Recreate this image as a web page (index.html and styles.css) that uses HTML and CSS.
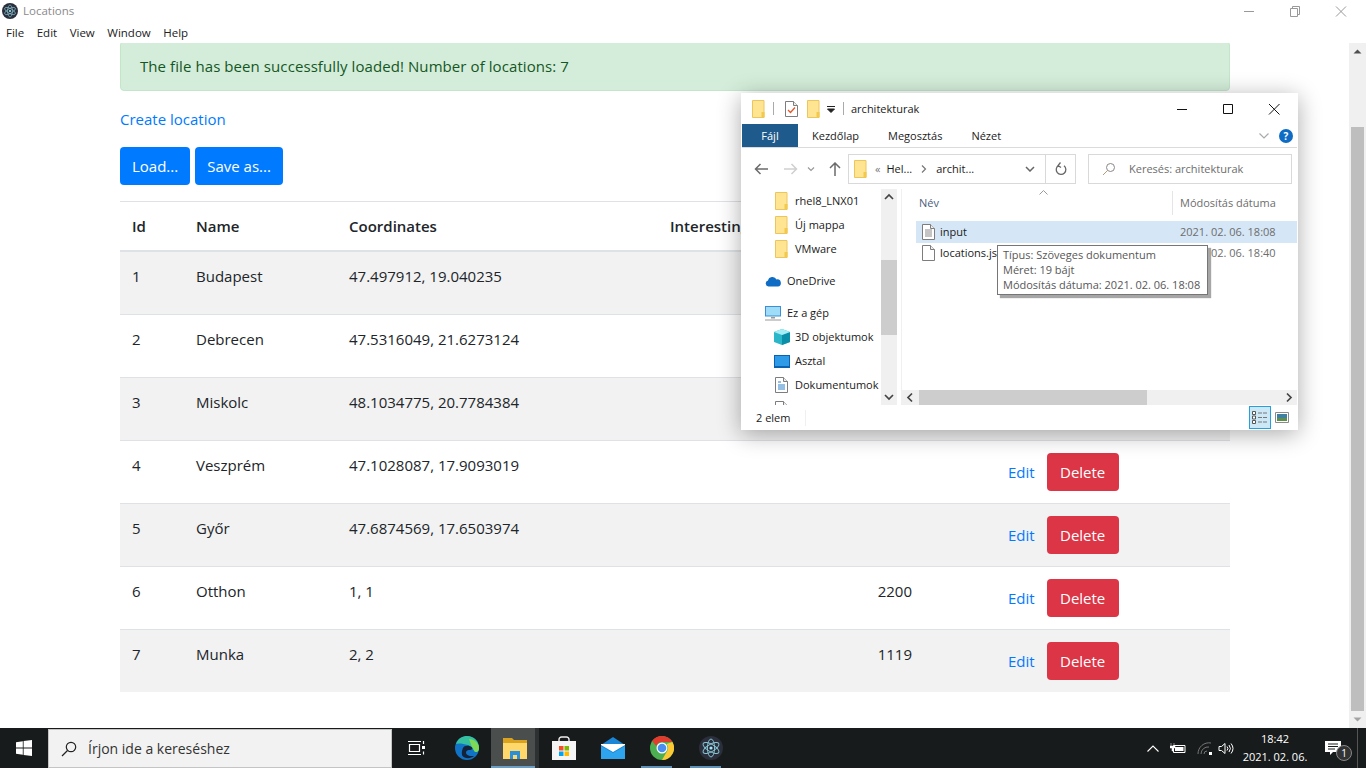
FILE: index.html
```html
<!DOCTYPE html>
<html lang="en">

<head>
    <meta charset="UTF-8">
    <title>Locations</title>
    <link rel="stylesheet" href="styles.css">
</head>

<body>
    <svg class="defs" width="0" height="0">
        <symbol id="folder" viewBox="0 0 13 18">
            <path d="M.5.5h11.5v17H.5z" fill="#ffe592" stroke="#ecc65c"/>
            <path d="M9.5 12h3v5.5h-3z" fill="#f2c94c"/>
        </symbol>
        <symbol id="doc" viewBox="0 0 13 16">
            <path d="M.5.5h8l4 4v11H.5z" fill="#fff" stroke="#7d7d7d"/>
            <path d="M8.5.5v4h4" fill="#eee" stroke="#7d7d7d"/>
        </symbol>
        <symbol id="electron" viewBox="0 0 24 24">
            <circle cx="12" cy="12" r="12" fill="#2b2e3b"/>
            <g fill="none" stroke="#9feaf9" stroke-width="1" opacity=".8">
                <ellipse cx="12" cy="12" rx="9" ry="3.6" transform="rotate(30 12 12)"/>
                <ellipse cx="12" cy="12" rx="9" ry="3.6" transform="rotate(90 12 12)"/>
                <ellipse cx="12" cy="12" rx="9" ry="3.6" transform="rotate(150 12 12)"/>
            </g>
            <circle cx="12" cy="12" r="1.6" fill="#9feaf9"/>
        </symbol>
    </svg>

    <header class="titlebar">
        <svg class="app-icon" width="16" height="16"><use href="#electron"/></svg>
        <span class="app-title">Locations</span>
        <div class="win-controls">
            <svg width="46" height="20" viewBox="0 0 46 20"><path d="M18 10.500h10" stroke="#999" fill="none"/></svg>
            <svg width="46" height="20" viewBox="0 0 46 20"><path d="M18.500 7.500h7v8h-7zM20.500 7.500v-2h7v8h-2" stroke="#999" fill="none"/></svg>
            <svg width="46" height="20" viewBox="0 0 46 20"><path d="M18 5.500l10 10M28 5.500l-10 10" stroke="#999" fill="none"/></svg>
        </div>
    </header>
    <nav class="menubar">
        <span>File</span>
        <span>Edit</span>
        <span>View</span>
        <span>Window</span>
        <span>Help</span>
    </nav>

    <div class="viewport">
        <main class="page">
            <div class="alert">The file has been successfully loaded! Number of locations: 7</div>
            <p class="create"><a href="#">Create location</a></p>
            <div class="file-buttons">
                <button class="btn btn-primary">Load...</button>
                <button class="btn btn-primary">Save as...</button>
            </div>

            <table class="locations">
                <colgroup>
                    <col class="col-id">
                    <col class="col-name">
                    <col class="col-coord">
                    <col class="col-int">
                    <col class="col-gap">
                    <col>
                </colgroup>
                <thead>
                    <tr>
                        <th>Id</th>
                        <th>Name</th>
                        <th>Coordinates</th>
                        <th>Interesting capacity</th>
                        <th></th>
                        <th></th>
                    </tr>
                </thead>
                <tbody>
                    <tr>
                        <td>1</td><td>Budapest</td><td>47.497912, 19.040235</td><td class="num"></td><td></td>
                        <td><a class="edit" href="#">Edit</a><button class="btn btn-danger">Delete</button></td>
                    </tr>
                    <tr>
                        <td>2</td><td>Debrecen</td><td>47.5316049, 21.6273124</td><td class="num"></td><td></td>
                        <td><a class="edit" href="#">Edit</a><button class="btn btn-danger">Delete</button></td>
                    </tr>
                    <tr>
                        <td>3</td><td>Miskolc</td><td>48.1034775, 20.7784384</td><td class="num"></td><td></td>
                        <td><a class="edit" href="#">Edit</a><button class="btn btn-danger">Delete</button></td>
                    </tr>
                    <tr>
                        <td>4</td><td>Veszprém</td><td>47.1028087, 17.9093019</td><td class="num"></td><td></td>
                        <td><a class="edit" href="#">Edit</a><button class="btn btn-danger">Delete</button></td>
                    </tr>
                    <tr>
                        <td>5</td><td>Győr</td><td>47.6874569, 17.6503974</td><td class="num"></td><td></td>
                        <td><a class="edit" href="#">Edit</a><button class="btn btn-danger">Delete</button></td>
                    </tr>
                    <tr>
                        <td>6</td><td>Otthon</td><td>1, 1</td><td class="num">2200</td><td></td>
                        <td><a class="edit" href="#">Edit</a><button class="btn btn-danger">Delete</button></td>
                    </tr>
                    <tr>
                        <td>7</td><td>Munka</td><td>2, 2</td><td class="num">1119</td><td></td>
                        <td><a class="edit" href="#">Edit</a><button class="btn btn-danger">Delete</button></td>
                    </tr>
                </tbody>
            </table>
        </main>

        <div class="page-scrollbar">
            <svg width="17" height="17" viewBox="0 0 17 17"><path d="M4.500 10.500l4-4 4 4z" fill="#505050"/></svg>
            <div class="page-track"><div class="page-thumb"></div></div>
            <svg width="17" height="17" viewBox="0 0 17 17"><path d="M4.500 6.500l4 4 4-4z" fill="#a3a3a3"/></svg>
        </div>
    </div>

    <!-- file explorer window on top of the app -->
    <section class="explorer">
        <div class="ex-title">
            <svg width="13" height="18"><use href="#folder"/></svg>
            <i class="ex-sep"></i>
            <svg class="ex-check" width="13" height="16" viewBox="0 0 13 16">
                <use href="#doc"/>
                <path d="M3 9l2.500 2.500L10 6.500" fill="none" stroke="#e2572b" stroke-width="1.300"/>
            </svg>
            <svg class="ex-folder2" width="13" height="18"><use href="#folder"/></svg>
            <svg class="ex-drop" width="10" height="10" viewBox="0 0 10 10"><path d="M1 2.500h8M1.500 5h7L5 8.500z" stroke="#222" fill="#222"/></svg>
            <i class="ex-sep ex-sep2"></i>
            <span class="ex-name">architekturak</span>
            <div class="ex-controls">
                <svg width="46" height="30" viewBox="0 0 46 30"><path d="M18 15.500h10" stroke="#111" fill="none"/></svg>
                <svg width="46" height="30" viewBox="0 0 46 30"><path d="M18.500 10.500h9v9h-9z" stroke="#111" fill="none"/></svg>
                <svg width="46" height="30" viewBox="0 0 46 30"><path d="M18 10l10.500 10.500M28.500 10L18 20.500" stroke="#111" fill="none"/></svg>
            </div>
        </div>

        <div class="ex-tabs">
            <span class="ex-tab-file">Fájl</span>
            <span class="ex-tab ex-tab-home">Kezdőlap</span>
            <span class="ex-tab ex-tab-share">Megosztás</span>
            <span class="ex-tab ex-tab-view">Nézet</span>
            <svg class="ex-collapse" width="12" height="8" viewBox="0 0 12 8"><path d="M1.500 1.500L6 6l4.500-4.500" fill="none" stroke="#aaa" stroke-width="1.200"/></svg>
            <span class="ex-help">?</span>
        </div>

        <div class="ex-nav">
            <svg class="ex-back" width="14" height="12" viewBox="0 0 14 12"><path d="M6.500 1L1.500 6l5 5M1.500 6H14" fill="none" stroke="#6b6b6b" stroke-width="1.500"/></svg>
            <svg class="ex-fwd" width="14" height="12" viewBox="0 0 14 12"><path d="M7.500 1l5 5-5 5M12.500 6H0" fill="none" stroke="#cfcfcf" stroke-width="1.500"/></svg>
            <svg class="ex-hist" width="8" height="6" viewBox="0 0 8 6"><path d="M1 1.500l3 3 3-3" fill="none" stroke="#999" stroke-width="1.200"/></svg>
            <svg class="ex-up" width="12" height="14" viewBox="0 0 12 14"><path d="M1 6l5-5 5 5M6 1v13" fill="none" stroke="#6b6b6b" stroke-width="1.500"/></svg>
            <div class="ex-address">
                <svg width="13" height="18"><use href="#folder"/></svg>
                <span class="ex-crumb-arrows">«</span>
                <span>Hel...</span>
                <svg class="ex-crumb-sep" width="6" height="8" viewBox="0 0 6 8"><path d="M1 .5L4.500 4 1 7.500" fill="none" stroke="#777" stroke-width="1.200"/></svg>
                <span>archit...</span>
                <svg class="ex-addr-drop" width="10" height="6" viewBox="0 0 10 6"><path d="M1 1l4 4 4-4" fill="none" stroke="#666" stroke-width="1.500"/></svg>
                <div class="ex-refresh">
                    <svg width="12" height="14" viewBox="0 0 12 14"><path d="M3.500 3.500A4.800 4.800 0 1 0 9 3.800M5.500 .5l-2.500 3 3 2" fill="none" stroke="#666" stroke-width="1.300"/></svg>
                </div>
            </div>
            <div class="ex-search">
                <svg width="14" height="14" viewBox="0 0 14 14"><circle cx="8.500" cy="5.500" r="4" fill="none" stroke="#888"/><path d="M5.500 8.500L1 13" stroke="#bb9a7a"/></svg>
                <span>Keresés: architekturak</span>
            </div>
        </div>

        <div class="ex-body">
            <div class="ex-tree">
                <ul class="ex-tree-list">
                    <li class="lvl2"><svg width="13" height="18"><use href="#folder"/></svg>rhel8_LNX01</li>
                    <li class="lvl2"><svg width="13" height="18"><use href="#folder"/></svg>Új mappa</li>
                    <li class="lvl2 group-end"><svg width="13" height="18"><use href="#folder"/></svg>VMware</li>
                    <li class="lvl1 group-end">
                        <svg width="16" height="11" viewBox="0 0 16 11"><path d="M3.500 10.500A3 3 0 0 1 3 4.600 4.500 4.500 0 0 1 11.500 3.500 3.500 3.500 0 0 1 13 10.500z" fill="#0f6cc4"/></svg>OneDrive
                    </li>
                    <li class="lvl1">
                        <svg width="16" height="15" viewBox="0 0 16 15"><path d="M0 0h16v10.500H0z" fill="#3a8fd6"/><path d="M1 1h14v8.500H1z" fill="#9fdcf8"/><path d="M6 11h4v1.500H6zM0 13.500h16v1H0z" fill="#9a9a9a"/></svg>Ez a gép
                    </li>
                    <li class="lvl2 wide">
                        <svg width="16" height="16" viewBox="0 0 16 16"><path d="M8 0l8 3v10l-8 3-8-3V3z" fill="#2bb7c9"/><path d="M8 6l8-3v10l-8 3z" fill="#0b8fa8"/><path d="M8 0l8 3-8 3-8-3z" fill="#a6edf5"/></svg>3D objektumok
                    </li>
                    <li class="lvl2 wide">
                        <svg width="16" height="13" viewBox="0 0 16 13"><path d="M0 0h16v13H0z" fill="#0a63b0"/><path d="M1 1h14v10H1z" fill="#2d9be8"/></svg>Asztal
                    </li>
                    <li class="lvl2">
                        <svg width="13" height="16" viewBox="0 0 13 16"><use href="#doc"/><path d="M3 5h3M3 8h7M3 10h7M3 12h7" stroke="#2a7fc7"/></svg>Dokumentumok
                    </li>
                    <li class="lvl2"><svg width="13" height="16" viewBox="0 0 13 16"><use href="#doc"/></svg>Képek</li>
                </ul>
                <div class="ex-vscroll">
                    <svg width="16" height="16" viewBox="0 0 16 16"><path d="M4 10l4-4 4 4" fill="none" stroke="#444" stroke-width="1.700"/></svg>
                    <div class="ex-vtrack"><div class="ex-vthumb"></div></div>
                    <svg width="16" height="16" viewBox="0 0 16 16"><path d="M4 6l4 4 4-4" fill="none" stroke="#444" stroke-width="1.700"/></svg>
                </div>
            </div>

            <div class="ex-files">
                <div class="ex-head">
                    <span class="ex-col-name">Név</span>
                    <svg class="ex-sort" width="9" height="5" viewBox="0 0 9 5"><path d="M.5 4.500l4-4 4 4" fill="none" stroke="#9a9a9a"/></svg>
                    <span class="ex-col-date">Módosítás dátuma</span>
                </div>
                <div class="ex-row is-selected">
                    <span class="ex-col-name">
                        <svg width="13" height="16" viewBox="0 0 13 16"><use href="#doc"/><path d="M3 6h7M3 8h7M3 10h7M3 12h7" stroke="#8a8a8a"/></svg>input
                    </span>
                    <span class="ex-col-date">2021. 02. 06. 18:08</span>
                </div>
                <div class="ex-row ex-row-next">
                    <span class="ex-col-name">
                        <svg width="13" height="16"><use href="#doc"/></svg>locations.json
                    </span>
                    <span class="ex-col-date">2021. 02. 06. 18:40</span>
                </div>
                <div class="ex-hscroll">
                    <svg width="17" height="15" viewBox="0 0 17 15"><path d="M10 3.500l-4 4 4 4" fill="none" stroke="#444" stroke-width="1.700"/></svg>
                    <div class="ex-hthumb"></div>
                    <svg width="17" height="15" viewBox="0 0 17 15"><path d="M7 3.500l4 4-4 4" fill="none" stroke="#444" stroke-width="1.700"/></svg>
                </div>
            </div>
        </div>

        <div class="ex-status">
            <span class="ex-count">2 elem</span>
            <div class="ex-views">
                <span class="ex-view is-on">
                    <svg width="16" height="13" viewBox="0 0 16 13"><path d="M.5.500h3v3h-3zM.5 5h3v3h-3zM.5 9.500h3v3h-3z" fill="#fff" stroke="#555"/><path d="M6 2h9.500M6 6.500h9.500M6 11h9.500" stroke="#777" stroke-dasharray="4 1"/></svg>
                </span>
                <svg width="14" height="11" viewBox="0 0 14 11"><path d="M.5.500h13v10H.5z" fill="#fff" stroke="#8a8a8a"/><path d="M2 2h10v4H2z" fill="#3f7f9f"/><path d="M2 6h10v3H2z" fill="#5f8f4f"/></svg>
            </div>
        </div>

        <div class="ex-tooltip">
            <div>Típus: Szöveges dokumentum</div>
            <div>Méret: 19 bájt</div>
            <div>Módosítás dátuma: 2021. 02. 06. 18:08</div>
        </div>
    </section>

    <footer class="taskbar">
        <div class="start">
            <svg width="16" height="16" viewBox="0 0 16 16"><path d="M0 2.200l6.800-1v6.300H0zM7.600 1.100L16 0v7.500H7.600zM0 8.400h6.800v6.400L0 13.800zM7.600 8.400H16V16l-8.400-1.100z" fill="#fff"/></svg>
        </div>
        <div class="task-search">
            <svg width="16" height="16" viewBox="0 0 16 16"><circle cx="10" cy="6" r="4.700" fill="none" stroke="#222" stroke-width="1.200"/><path d="M6.500 9.500L1 15" stroke="#222" stroke-width="1.200"/></svg>
            <span>Írjon ide a kereséshez</span>
        </div>
        <div class="task-item task-view">
            <svg width="18" height="16" viewBox="0 0 18 16"><path d="M2.500 4.500h10v7h-10zM1 1.500h13M1 14.500h13M16.500 1v3M16.500 11.500v3" fill="none" stroke="#fff" stroke-width="1.200"/><path d="M15 6h3v3h-3z" fill="#fff"/></svg>
        </div>
        <div class="task-item task-edge">
            <svg width="24" height="24" viewBox="0 0 24 24">
                <circle cx="12" cy="12" r="12" fill="#1173c5"/>
                <path d="M1 8C3 2 8 0 12 0c7 0 12 5 12 12 0 2-1 4-3 4-3 0-2-5-8-7C8 7.500 3 7 1 8z" fill="#35c1a1"/>
                <path d="M14 3c5 0 10 4 10 9 0 2-1 4-3 4-2 0-2-3-4-5z" fill="#7ed957"/>
                <path d="M8 12c1-3 7-3 9-.5 1 1.500-.5 2.500-2 2.500-2 0-4 .5-4 2.500 0 3 5 4 8 3.500-3 2.500-8 3-11 .5C6 18.500 7 14 8 12z" fill="#13233a"/>
            </svg>
        </div>
        <div class="task-item task-files is-active">
            <svg width="24" height="21" viewBox="0 0 24 21">
                <path d="M0 0h9l2 2h13v4H0z" fill="#d9a21f"/>
                <path d="M0 5h24v16H0z" fill="#ffd86b"/>
                <path d="M7 13h10v8h-3v-4h-4v4H7z" fill="#2a8fd8"/>
            </svg>
        </div>
        <div class="task-item">
            <svg width="24" height="24" viewBox="0 0 24 24">
                <path d="M7 6V3.500A2.500 2.500 0 0 1 9.500 1h5A2.500 2.500 0 0 1 17 3.500V6" fill="none" stroke="#eee" stroke-width="1.400"/>
                <path d="M0 5h24v19H0z" fill="#f5f5f5"/>
                <path d="M7 10h4.500v4.500H7z" fill="#f25022"/>
                <path d="M12.500 10H17v4.500h-4.500z" fill="#7fba00"/>
                <path d="M7 15.500h4.500V20H7z" fill="#00a4ef"/>
                <path d="M12.500 15.500H17V20h-4.500z" fill="#ffb900"/>
            </svg>
        </div>
        <div class="task-item">
            <svg width="24" height="22" viewBox="0 0 24 22">
                <path d="M0 8L12 0l12 8v14H0z" fill="#1b86d8"/>
                <path d="M0 7h24v1L12 15 0 8z" fill="#fff"/>
                <path d="M0 9l12 7 12-7v13H0z" fill="#2ea3ee"/>
            </svg>
        </div>
        <div class="task-item is-running">
            <svg width="24" height="24" viewBox="0 0 24 24">
                <circle cx="12" cy="12" r="12" fill="#4caf50"/>
                <path d="M12 0a12 12 0 0 1 10.400 6H12a6 6 0 0 0-5.700 4.200L2.200 5.100A12 12 0 0 1 12 0z" fill="#e33b2e"/>
                <path d="M22.400 6A12 12 0 0 1 12 24l5.200-9a6 6 0 0 0-.7-7z" fill="#fcc934"/>
                <circle cx="12" cy="12" r="5.500" fill="#fff"/>
                <circle cx="12" cy="12" r="4.300" fill="#4b8ef0"/>
            </svg>
        </div>
        <div class="task-item is-running">
            <svg width="24" height="24"><use href="#electron"/></svg>
        </div>

        <div class="tray">
            <svg class="tray-up" width="12" height="7" viewBox="0 0 12 7"><path d="M.5 6.500L6 1l5.500 5.500" fill="none" stroke="#fff" stroke-width="1.100"/></svg>
            <svg class="tray-batt" width="16" height="12" viewBox="0 0 16 12"><path d="M3.500 3.500h11.500v7H3.500z" fill="none" stroke="#fff"/><path d="M5 5h8.500v4H5z" fill="#fff"/><path d="M1 1v3M4 1v3M0 4h5v2H3.500v3H2V6H0z" fill="#fff" stroke="#fff" stroke-width=".5"/></svg>
            <svg class="tray-wifi" width="16" height="13" viewBox="0 0 16 13"><path d="M1 12A11 11 0 0 1 14 1M4 12a7 7 0 0 1 8-7M7 12a3 3 0 0 1 3-3" fill="none" stroke="#777"/><path d="M12 10h3v3h-3z" fill="#fff"/></svg>
            <svg class="tray-vol" width="16" height="13" viewBox="0 0 16 13"><path d="M1 4.500h2.500L7 1.500v10l-3.500-3H1zM9 4.500a3 3 0 0 1 0 4M11 3a5.500 5.500 0 0 1 0 7M13 1.500a8 8 0 0 1 0 10" fill="none" stroke="#fff"/></svg>
            <div class="clock">
                <span>18:42</span>
                <span>2021. 02. 06.</span>
            </div>
            <div class="notif">
                <svg width="16" height="15" viewBox="0 0 16 15"><path d="M0 0h16v11H8l-3 3v-3H0z" fill="#fff"/><path d="M3 3h10M3 5.500h10M3 8h7" stroke="#1a1c1c"/></svg>
                <span class="notif-badge">1</span>
            </div>
        </div>
        <i class="show-desktop"></i>
    </footer>
</body>

</html>
```

FILE: styles.css
```css
* {
    box-sizing: border-box;
}

html,
body {
    height: 100%;
}

body {
    margin: 0;
    display: flex;
    flex-direction: column;
    height: 768px;
    overflow: hidden;
    position: relative;
    background-color: #fff;
    font-family: 'Open Sans', 'Noto Sans', sans-serif;
    font-size: 15px;
    line-height: 24px;
    color: #212529;
}

.defs {
    position: absolute;
}

svg {
    display: block;
    flex: none;
}

/* app title and menu */
.titlebar {
    height: 22px;
    display: flex;
    align-items: center;
    flex: none;
    padding-left: 2px;
}

.app-title {
    margin-left: 5px;
    font-size: 11.500px;
    color: #8a8a8a;
}

.win-controls {
    margin-left: auto;
    display: flex;
    padding-right: 2px;
}

.menubar {
    height: 21px;
    flex: none;
    display: flex;
    align-items: center;
    padding-left: 6px;
    gap: 12.500px;
    font-size: 11.500px;
    color: #222;
}

/* app content */
.viewport {
    flex: 1;
    min-height: 0;
    display: flex;
    overflow: hidden;
}

.page {
    flex: 1;
    margin-top: -2px;
    padding: 0 120px;
    margin-right: -1px;
}

.alert {
    height: 50px;
    padding: 12px 20px 12px 19px;
    background-color: #d4edda;
    border: 1px solid #c3e6cb;
    border-radius: 4px;
    color: #155724;
    margin-bottom: 16px;
    letter-spacing: 0.08px;
}

.create {
    margin: 0 0 16px;
}

a {
    color: #007bff;
    text-decoration: none;
}

.file-buttons {
    display: flex;
    gap: 5px;
    margin-bottom: 16px;
}

.btn {
    height: 38px;
    padding: 0 12px;
    border: none;
    border-radius: 4px;
    color: #fff;
    font: inherit;
}

.btn-primary {
    background-color: #007bff;
}

.btn-danger {
    background-color: #dc3545;
    width: 72px;
}

.locations {
    width: 100%;
    table-layout: fixed;
    border-collapse: collapse;
}

.col-id {
    width: 64px;
}

.col-name {
    width: 153px;
}

.col-coord {
    width: 321px;
}

.col-int {
    width: 266px;
}

.col-gap {
    width: 60px;
}

.locations th,
.locations td {
    padding: 12px;
    text-align: left;
    vertical-align: top;
    border-top: 1px solid #dee2e6;
    white-space: nowrap;
}

.locations th {
    font-weight: 600;
    border-bottom: 2px solid #dee2e6;
    height: 49px;
}

.locations td {
    height: 63px;
}

.locations tbody tr:last-child td {
    height: 62px;
    padding-bottom: 11px;
}

.locations tbody tr:nth-child(odd) {
    background-color: #f2f2f2;
}

.locations .num {
    text-align: right;
}

.edit {
    display: inline-block;
    padding: 7px 12px;
}

.page-scrollbar {
    width: 17px;
    flex: none;
    display: flex;
    flex-direction: column;
    background-color: #f0f0f0;
}

.page-track {
    flex: 1;
    padding-top: 67px;
}

.page-thumb {
    height: 100%;
    margin: 0 2px;
    background-color: #bebebe;
}

/* explorer window */
.explorer {
    position: absolute;
    left: 741px;
    top: 93px;
    width: 557px;
    height: 337px;
    display: flex;
    flex-direction: column;
    background-color: #fff;
    box-shadow: 0 4px 22px rgba(0, 0, 0, 0.33);
    font-size: 11px;
    line-height: 16px;
    color: #1a1a1a;
    padding: 0 1px;
}

.ex-title {
    height: 31px;
    flex: none;
    display: flex;
    align-items: center;
    padding-left: 10px;
}

.ex-sep {
    width: 1px;
    height: 13px;
    margin-left: 8px;
    background-color: #aaa;
}

.ex-check {
    margin-left: 11px;
}

.ex-folder2 {
    margin-left: 9px;
}

.ex-drop {
    margin-left: 6px;
}

.ex-sep2 {
    margin-left: 7px;
}

.ex-name {
    margin-left: 7px;
    font-size: 11px;
}

.ex-controls {
    margin-left: auto;
    display: flex;
}

.ex-tabs {
    height: 24px;
    flex: none;
    display: flex;
    align-items: center;
    border-bottom: 1px solid #dadbdc;
}

.ex-tab-file {
    width: 56px;
    height: 23px;
    background-color: #1f5a8c;
    color: #fff;
    text-align: center;
    line-height: 23px;
}

.ex-tab {
    color: #222;
    font-size: 11px;
}

.ex-tab-home {
    margin-left: 14px;
}

.ex-tab-share {
    margin-left: 29px;
}

.ex-tab-view {
    margin-left: 29px;
}

.ex-collapse {
    margin-left: auto;
}

.ex-help {
    width: 14px;
    height: 14px;
    margin: 0 4px 0 9px;
    border-radius: 50%;
    background-color: #0f6cc4;
    color: #fff;
    font-size: 10px;
    font-weight: 700;
    line-height: 14px;
    text-align: center;
}

.ex-nav {
    height: 41px;
    flex: none;
    display: flex;
    align-items: center;
    position: relative;
}

.ex-back {
    margin-left: 12px;
}

.ex-fwd {
    margin-left: 16px;
}

.ex-hist {
    margin-left: 9px;
}

.ex-up {
    margin-left: 14px;
}

.ex-address {
    width: 228px;
    height: 30px;
    margin-left: 7px;
    display: flex;
    align-items: center;
    gap: 6px;
    padding-left: 5px;
    border: 1px solid #d9d9d9;
}

.ex-crumb-arrows {
    color: #777;
    margin-left: 2px;
}

.ex-crumb-sep {
    margin: 0 3px;
}

.ex-addr-drop {
    margin-left: auto;
}

.ex-refresh {
    width: 30px;
    height: 28px;
    margin-left: 4px;
    display: flex;
    align-items: center;
    justify-content: center;
    border-left: 1px solid #d9d9d9;
}

.ex-search {
    width: 204px;
    height: 30px;
    margin-left: 12px;
    display: flex;
    align-items: center;
    gap: 13px;
    padding-left: 13px;
    border: 1px solid #d9d9d9;
    color: #6d6d6d;
}

.ex-body {
    flex: 1;
    min-height: 0;
    display: flex;
}

.ex-tree {
    width: 155px;
    flex: none;
    display: flex;
    overflow: hidden;
}

.ex-tree-list {
    flex: 1;
    margin: 0;
    padding: 0;
    list-style: none;
    overflow: hidden;
}

.ex-tree-list li {
    height: 24px;
    display: flex;
    align-items: center;
    white-space: nowrap;
    gap: 7px;
}

.ex-tree-list .lvl1 {
    padding-left: 23px;
    gap: 6px;
}

.ex-tree-list .lvl2 {
    padding-left: 33px;
}

.ex-tree-list .lvl2.wide {
    padding-left: 32px;
    gap: 5px;
}

.ex-tree-list .group-end {
    margin-bottom: 8px;
}

.ex-vscroll {
    width: 16px;
    flex: none;
    display: flex;
    flex-direction: column;
    background-color: #f0f0f0;
}

.ex-vtrack {
    flex: 1;
    padding-top: 55px;
}

.ex-vthumb {
    height: 75px;
    background-color: #cdcdcd;
}

.ex-files {
    flex: 1;
    margin-left: 4px;
    display: flex;
    flex-direction: column;
    border-left: 1px solid #f0f0f0;
}

.ex-head {
    height: 28px;
    margin-bottom: 4px;
    flex: none;
    display: flex;
    align-items: center;
    padding-left: 17px;
    position: relative;
    color: #4c607a;
}

.ex-sort {
    position: absolute;
    left: 137px;
    top: 1px;
}

.ex-col-name {
    display: flex;
    align-items: center;
    gap: 5px;
    width: 257px;
    flex: none;
    padding-left: 6px;
    white-space: nowrap;
}

.ex-head .ex-col-name {
    width: 254px;
    padding-left: 0;
    border-right: 1px solid #e5e5e5;
    height: 24px;
}

.ex-col-date {
    padding-left: 7px;
    color: #6d6d6d;
    white-space: nowrap;
}

.ex-row {
    height: 22px;
    flex: none;
    margin-left: 14px;
    display: flex;
    align-items: center;
}

.ex-row-next {
    margin-top: -1px;
}

.ex-row.is-selected {
    background-color: #d5e6f6;
}

.ex-hscroll {
    margin-top: auto;
    height: 15px;
    flex: none;
    display: flex;
    background-color: #f0f0f0;
}

.ex-hthumb {
    width: 228px;
    background-color: #cdcdcd;
    margin-right: auto;
}

.ex-status {
    height: 25px;
    flex: none;
    display: flex;
    align-items: center;
    padding-left: 14px;
}

.ex-count {
    padding-right: 15px;
    border-right: 1px solid #f0f0f0;
}

.ex-views {
    margin-left: auto;
    margin-right: 8px;
    display: flex;
    align-items: center;
    gap: 4px;
}

.ex-view {
    width: 22px;
    height: 23px;
    display: flex;
    align-items: center;
    justify-content: center;
    background-color: #cce8f7;
    border: 1px solid #26a0da;
}

.ex-tooltip {
    position: absolute;
    left: 256px;
    top: 152px;
    width: 211px;
    height: 50px;
    padding: 1px 5px;
    background-color: #fff;
    border: 1px solid #767676;
    box-shadow: 3px 3px 1px rgba(0, 0, 0, 0.35);
    color: #575757;
    font-size: 11px;
    line-height: 15px;
    white-space: nowrap;
}

/* windows taskbar */
.taskbar {
    height: 40px;
    flex: none;
    display: flex;
    align-items: stretch;
    background-color: #181b1b;
    color: #fff;
}

.start {
    width: 48px;
    display: flex;
    align-items: center;
    justify-content: center;
}

.task-search {
    width: 344px;
    display: flex;
    align-items: center;
    gap: 11px;
    padding-left: 12px;
    margin-top: 1px;
    background-color: #f2f2f2;
    border: 1px solid #c4c4c4;
    color: #333;
    font-size: 14px;
}

.task-item {
    width: 49px;
    display: flex;
    align-items: center;
    justify-content: center;
    position: relative;
}

.task-view {
    width: 48px;
}

.task-edge {
    margin-left: 2px;
}

.task-files.is-active {
    background-color: #4a4e4d;
    border-right: 4px solid #2e3131;
    padding-left: 4px;
    width: 48px;
}

.is-active::after,
.is-running::after {
    content: "";
    position: absolute;
    bottom: 0;
    left: 0;
    height: 2px;
    background-color: #76b9ed;
    opacity: 0.75;
}

.is-active::after {
    width: 44px;
}

.is-running::after {
    left: 4px;
    width: 31px;
}

.tray {
    margin-left: auto;
    display: flex;
    align-items: center;
}

.tray-vol {
    margin-left: 5px;
}

.tray-wifi {
    margin-left: 11px;
}

.tray-batt {
    margin-left: 11px;
}

.clock {
    width: 66px;
    margin-left: 8px;
    display: flex;
    flex-direction: column;
    align-items: center;
    font-size: 11px;
    line-height: 18px;
}

.notif {
    width: 49px;
    height: 40px;
    position: relative;
    display: flex;
    align-items: center;
    justify-content: center;
}

.notif-badge {
    position: absolute;
    left: 28px;
    top: 17px;
    width: 16px;
    height: 16px;
    border-radius: 50%;
    background-color: #333;
    border: 1px solid #888;
    font-size: 10px;
    line-height: 14px;
    text-align: center;
}

.show-desktop {
    width: 9px;
    border-left: 1px solid #555;
}
```
